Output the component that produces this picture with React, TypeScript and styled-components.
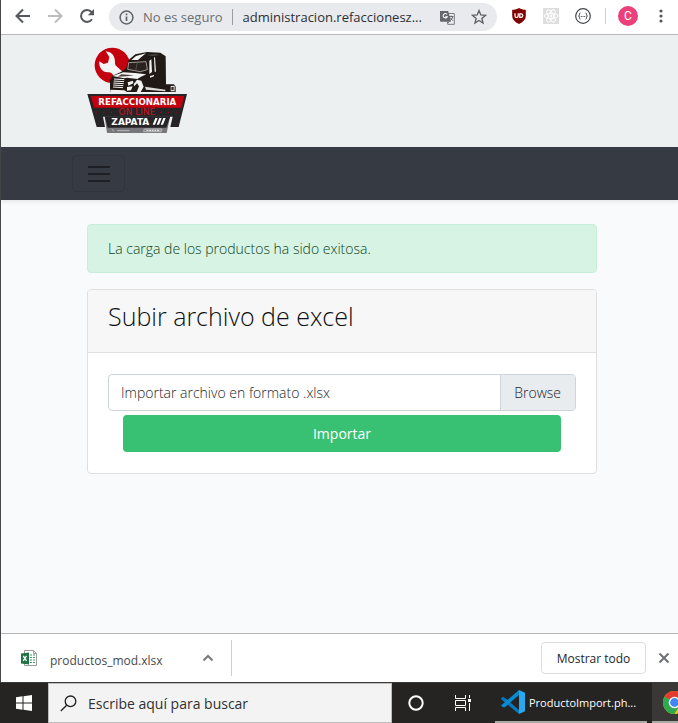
import React from "react";
import styled, { createGlobalStyle, css } from "styled-components";

const uiFont = '"Open Sans", "Noto Sans", sans-serif';
const siteFont = '"Open Sans", "Noto Sans", sans-serif';

const GlobalStyle = createGlobalStyle`
  *, *::before, *::after { box-sizing: border-box; }
  body { margin: 0; background: #f8fafc; font-family: ${siteFont}; }
  button, input { font: inherit; color: inherit; margin: 0; padding: 0; }
  h1, p { margin: 0; }
  svg { display: block; flex: none; }
`;

const Screen = styled.div`
  min-height: 100vh;
  display: flex;
  flex-direction: column;
`;

const BrowserWindow = styled.div`
  flex: 1;
  display: flex;
  flex-direction: column;
  border-left: 1px solid #46474a;
`;

const Toolbar = styled.header`
  display: flex;
  align-items: center;
  height: 35px;
  padding: 0 7px 2px 12px;
  background: #fff;
  border-bottom: 1px solid #b4b6b8;
  font-family: ${uiFont};
`;

const IconButton = styled.button<{ $w?: number }>`
  display: flex;
  align-items: center;
  justify-content: center;
  flex: none;
  width: ${({ $w = 32 }) => $w}px;
  height: 28px;
  border: 0;
  background: transparent;
  cursor: pointer;
`;

const AddressBar = styled.div`
  flex: 1;
  min-width: 0;
  display: flex;
  align-items: center;
  height: 28px;
  margin: 2px 6px 0 12px;
  padding: 0 2px 0 10px;
  border-radius: 14px;
  background: #e8eaed;
  font-size: 13px;
`;

const Security = styled.span`
  flex: none;
  padding: 0 9px;
  color: #6a6e73;
  border-right: 1px solid #9a9da1;
  line-height: 16px;
`;

const Address = styled.input`
  flex: 1;
  min-width: 0;
  margin-left: 10px;
  border: 0;
  outline: 0;
  background: transparent;
  color: #2c2f33;
`;

const Divider = styled.span<{ $h: number; $gap?: number }>`
  flex: none;
  width: 1px;
  height: ${({ $h }) => $h}px;
  margin-left: ${({ $gap = 0 }) => $gap}px;
  background: #cdcfd2;
`;

const Avatar = styled.button`
  flex: none;
  width: 20px;
  height: 20px;
  margin: 0 13px 0 12px;
  border: 0;
  border-radius: 50%;
  background: #ec407a;
  color: #fff;
  font: 12px/20px Roboto, sans-serif;
`;

const container = css`
  width: 100%;
  max-width: 540px;
  margin: 0 auto;
  padding: 0 15px;
`;

const Site = styled.div`
  flex: 1;
  background: #f8fafc;
`;

const Banner = styled.div`
  padding: 12px 0 13px 5px;
  background: #ecf0f1;
`;

const BannerInner = styled.div`
  ${container}
`;

const Navbar = styled.nav`
  padding: 8px 0 8px 5px;
  background: #363a42;
  box-shadow: 0 2px 4px rgba(0, 0, 0, 0.08);
`;

const NavInner = styled.div`
  ${container}
  padding: 0;
`;

const Toggler = styled.button`
  display: flex;
  align-items: center;
  justify-content: center;
  width: 53px;
  height: 37px;
  border: 1px solid #31343b;
  border-radius: 4px;
  background: transparent;
`;

const Content = styled.main`
  padding: 24px 0 24px 5px;
`;

const ContentInner = styled.div`
  ${container}
  display: flex;
  flex-direction: column;
  gap: 16px;
`;

const Alert = styled.div`
  padding: 12px 20px;
  border: 1px solid #c8eed9;
  border-radius: 4px;
  background: #d7f3e3;
  color: #0b4423;
  font-size: 14px;
  line-height: 23px;
  font-weight: 300;
`;

const Card = styled.section`
  border: 1px solid #dfdfe0;
  border-radius: 4px;
  background: #fff;
  overflow: hidden;
`;

const CardHeader = styled.div`
  padding: 11px 20px 21px;
  background: #f7f7f7;
  border-bottom: 1px solid #dfdfdf;
`;

const Title = styled.h1`
  font-size: 25px;
  line-height: 30px;
  font-weight: 300;
  color: #0c0f13;
`;

const CardBody = styled.form`
  padding: 21px 20px;
`;

const FileField = styled.label`
  display: flex;
  height: 37px;
  border: 1px solid #ced4da;
  border-radius: 4px;
  background: #fff;
  color: #212529;
  font-size: 14px;
  line-height: 35px;
  font-weight: 300;
  overflow: hidden;
  cursor: pointer;
`;

const FileName = styled.span`
  flex: 1;
  padding: 0 12px;
`;

const Browse = styled.span`
  padding: 0 14px 0 13px;
  border-left: 1px solid #ced4da;
  background: #e9ecef;
`;

const HiddenFile = styled.input`
  position: absolute;
  width: 1px;
  height: 1px;
  opacity: 0;
`;

const SubmitRow = styled.div`
  padding: 4px 15px 0;
`;

const Submit = styled.button`
  display: block;
  width: 100%;
  height: 37px;
  border: 0;
  border-radius: 4px;
  background: #38c172;
  color: #fff;
  font-size: 14px;
  cursor: pointer;
`;

const Downloads = styled.footer`
  display: flex;
  align-items: center;
  height: 49px;
  padding-left: 20px;
  border-top: 1px solid #b4b6b8;
  background: #fff;
  font-family: ${uiFont};
`;

const Download = styled.a`
  display: flex;
  align-items: center;
  gap: 12px;
  width: 178px;
  color: #46494d;
  font-size: 12px;
  text-decoration: none;
`;

const DownloadName = styled.span`
  padding-top: 4px;
`;

const Spacer = styled.span`
  flex: 1;
`;

const ShowAll = styled.button`
  height: 32px;
  width: 105px;
  margin-right: 4px;
  border: 1px solid #dadce0;
  border-radius: 4px;
  background: #fff;
  color: #24272a;
  font-size: 12px;
`;

const Taskbar = styled.div`
  display: flex;
  height: 41px;
  background: #252422;
  border-top: 1px solid #3a3a3a;
  color: #fff;
  font-family: ${uiFont};
  overflow: hidden;
`;

const TaskButton = styled.button<{ $w: number }>`
  display: flex;
  align-items: center;
  justify-content: center;
  flex: none;
  width: ${({ $w }) => $w}px;
  border: 0;
  background: transparent;
`;

const SearchBox = styled.label`
  flex: 1;
  min-width: 0;
  display: flex;
  align-items: center;
  gap: 11px;
  padding-left: 11px;
  border: 1px solid #bdbdbd;
  background: #f3f3f3;
`;

const SearchInput = styled.input`
  flex: 1;
  min-width: 0;
  border: 0;
  outline: 0;
  background: transparent;
  font-size: 14px;
  &::placeholder { color: #303030; opacity: 1; }
`;

const RunningTask = styled.button`
  display: flex;
  align-items: center;
  flex: none;
  gap: 3px;
  width: 152px;
  margin: 0 5px 0 8px;
  padding-left: 6px;
  border: 0;
  border-bottom: 2px solid #a9a9a5;
  background: transparent;
  font-size: 11px;
  white-space: nowrap;
`;

const ActiveTask = styled.button`
  flex: none;
  width: 26px;
  padding-left: 11px;
  border: 0;
  border-bottom: 2px solid #a9a9a5;
  background: #393836;
  overflow: hidden;
`;

const Arrow = ({ color, forward }: { color: string; forward?: boolean }) => (
  <svg width="16" height="16" viewBox="0 0 16 16" fill="none" stroke={color} strokeWidth="2">
    {forward ? <path d="M1 8h13M8 1.5 14.5 8 8 14.5" /> : <path d="M15 8H2M8 1.5 1.5 8 8 14.5" />}
  </svg>
);

const Reload = () => (
  <svg width="16" height="16" viewBox="0 0 16 16">
    <path d="M13 11.3A6 6 0 1 1 12.6 4" fill="none" stroke="#54585d" strokeWidth="2" />
    <path d="M15 1v6.2H8.8z" fill="#54585d" />
  </svg>
);

const Info = () => (
  <svg width="15" height="15" viewBox="0 0 15 15">
    <circle cx="7.5" cy="7.5" r="6.4" fill="none" stroke="#5f6368" strokeWidth="1.5" />
    <path d="M7.5 6.5v4.5M7.5 3.6v1.7" stroke="#5f6368" strokeWidth="1.7" />
  </svg>
);

const Translate = () => (
  <svg width="15" height="15" viewBox="0 0 15 15" fill="none">
    <path d="M6 3.5h8.3v10.8H7.5" fill="#eff0f2" stroke="#777b80" />
    <path d="M0 1h8.2l2.8 10.8H1a1 1 0 0 1-1-1z" fill="#63676c" />
    <path d="M7 4.3a2.2 2.2 0 1 0 .3 2.4H5.2" stroke="#fff" strokeWidth="1.1" />
    <path d="M9 6.6h4.5M11.2 5.5v1M12.7 6.8c-.3 1.8-1.6 3-2.5 3.8M10 7.5l3 3.3" stroke="#63676c" />
    <path d="M7.3 14.3l2.3-2.5H7z" fill="#63676c" />
  </svg>
);

const Star = () => (
  <svg width="16" height="16" viewBox="0 0 16 16">
    <path d="M8 1.6l1.8 4.3 4.7.4-3.6 3.1 1.1 4.6L8 11.5 4 14l1.1-4.6-3.6-3.1 4.7-.4z" fill="none" stroke="#5f6368" strokeWidth="1.4" />
  </svg>
);

const Shield = () => (
  <svg width="16" height="16" viewBox="0 0 16 16" fill="none">
    <path d="M8 0c2 1.3 4 1.7 6.8 1.8v6C14.8 11.6 12 14.2 8 16 4 14.2 1.2 11.6 1.2 7.8v-6C4 1.7 6 1.3 8 0z" fill="#800000" />
    <path d="M4 5.3v2.6a1.6 1.6 0 0 0 3.2 0V5.3" stroke="#fff" strokeWidth="1.2" />
    <path d="M8.8 5.8h1.3a1.7 1.7 0 0 1 0 3.5H8.8z" stroke="#fff" strokeWidth="1.2" />
  </svg>
);

const Atom = () => (
  <svg width="16" height="16" viewBox="0 0 16 16" fill="none" stroke="#fff">
    <path d="M0 0h16v16H0z" fill="#dedede" stroke="none" />
    <ellipse cx="8" cy="8" rx="6.8" ry="2.6" />
    <ellipse cx="8" cy="8" rx="6.8" ry="2.6" transform="rotate(60 8 8)" />
    <ellipse cx="8" cy="8" rx="6.8" ry="2.6" transform="rotate(120 8 8)" />
    <circle cx="8" cy="8" r="1" fill="#fff" />
  </svg>
);

const Braces = () => (
  <svg width="16" height="16" viewBox="0 0 16 16" fill="none" stroke="#45484b">
    <circle cx="8" cy="8" r="7.3" strokeWidth="1.2" />
    <path d="M5.5 5c-1.3 0-1 .6-1 1.7 0 .8-.3 1.1-1 1.3.7.2 1 .5 1 1.3 0 1.1-.3 1.7 1 1.7M10.5 5c1.3 0 1 .6 1 1.7 0 .8.3 1.1 1 1.3-.7.2-1 .5-1 1.3 0 1.1.3 1.7-1 1.7" />
    <path d="M5.8 8.5h1M7.5 8.5h1M9.2 8.5h1" />
  </svg>
);

const Dots = () => (
  <svg width="4" height="16" viewBox="0 0 4 16" fill="#54585d">
    <circle cx="2" cy="3" r="1.6" />
    <circle cx="2" cy="8" r="1.6" />
    <circle cx="2" cy="13" r="1.6" />
  </svg>
);

const Logo = () => (
  <svg width="100" height="87" viewBox="51 21 300 261" role="img" aria-label="Refaccionaria On Line Zapata">
    <circle cx="127" cy="76" r="53" fill="#c4000f" />
    <path d="M88 64c-2 18 8 33 25 33 6 0 9 0 13 4l14 16 26-14-28-26c-3-3-3-7-3-12 0-17-10-29-28-31l11 17-4 17-13 4z" fill="#f4f4f4" />
    <path d="M120 156v-36l8-13 26-12 14-10 8-25 20-17 35-7 40 2 16 11 1 84h24l5 7v16z" fill="#211915" />
    <path d="M184 60l14-12 30-8-14 11-10 9z" fill="#f4f4f4" />
    <path d="M176 68l52-3 4 24-21 6-38-7z" fill="#2b211d" stroke="#d8d6d5" strokeWidth="2" />
    <path d="M202 67l-5 25" stroke="#6b6563" strokeWidth="2" />
    <path d="M238 62l6-4 2 38-8 6zM252 53l3-2 3 44h-4zM240 108l12-3v4l-12 4z" fill="#f1f1f1" />
    <path d="M229 45l26-3 15 3-22 3z" fill="#4a4441" />
    <path d="M128 108l32-11 35 2 34 4-16 7-11 7-31-4-9 2z" fill="#f4f4f4" />
    <path d="M154 103l38 3-22 3-27 1z" fill="#51433e" />
    <path d="M132 117l31 2M131 123l31 2M130 129l31 2M130 135l30 2M129 141l30 2" stroke="#f4f4f4" strokeWidth="3" />
    <path d="M121 149l42 2 8 5h-50zM173 127l16-5 1 8-15 7zM171 141l17-2-5 12-12 1zM191 133l10-14 13 3 7 18-9 16h-12l7-17-6-9-8 9z" fill="#f1f1f1" />
    <path d="M225 140l61 9v5l-58-5zM302 138l12-1v17h-12z" fill="#dedddd" />
    <path d="M304 141h7v9h-7z" fill="#3a312e" />
    <path d="M104 231l7 48h179l10-48z" fill="#77777b" />
    <path d="M52 162h299l-25 99h-25l7-31H99l6 31H80z" fill="#272427" />
    <path d="M104 229h197l-12 34H113z" fill="#272427" />
    <path d="M62 168h280l-8 35H72z" fill="#c4000f" />
    <g fontFamily="DejaVu Sans, sans-serif" textAnchor="middle">
      <text x="202" y="194" fontSize="26" fontWeight="700" fill="#fff">REFACCIONARIA</text>
      <text x="201" y="225" fontSize="27" fill="#c81824">ON LINE</text>
      <text x="181" y="254" fontSize="27" fontWeight="700" fill="#fff">ZAPATA</text>
    </g>
    <path d="M248 254l8-20h7l-8 20zM260 254l8-20h7l-8 20zM272 254l8-20h7l-8 20z" fill="#fff" />
    <path d="M77 217h3m20 0h3m20 0h3m145 0h3m20 0h3m20 0h3" stroke="#c4000f" strokeWidth="3" />
    <path d="M223 267h53l-2 8h-53zM142 272h36M125 267l7 7" fill="none" stroke="#bcbcc0" strokeWidth="3" />
    <path d="M229 271h42" stroke="#dedee0" strokeWidth="4" strokeDasharray="6 2" />
  </svg>
);

const Menu = () => (
  <svg width="22" height="18" viewBox="0 0 22 18" stroke="#1d1f24" strokeWidth="2">
    <path d="M0 2h22M0 9h22M0 16h22" />
  </svg>
);

const Excel = () => (
  <svg width="17" height="17" viewBox="0 0 17 17" fill="none">
    <path d="M3.5.5h9l3 3v12h-12z" fill="#fff" stroke="#9b9b9b" />
    <path d="M12.5.5v3h3" stroke="#9b9b9b" />
    <path d="M9 5h2M12 5h2M9 7.5h2M12 7.5h2M9 10h2M12 10h2M9 12.5h2M12 12.5h2" stroke="#459267" />
    <path d="M0 3.5 8 2.5v12L0 13.5z" fill="#217346" />
    <path d="M2.2 5.8l3.3 5M5.5 5.8l-3.3 5" stroke="#fff" strokeWidth="1.3" />
  </svg>
);

const Chevron = () => (
  <svg width="12" height="8" viewBox="0 0 12 8" fill="none" stroke="#777a7d" strokeWidth="2">
    <path d="M1.5 6.5 6 2l4.5 4.5" />
  </svg>
);

const Close = () => (
  <svg width="12" height="12" viewBox="0 0 12 12" stroke="#6d7074" strokeWidth="2">
    <path d="M1.5 1.5l9 9M10.5 1.5l-9 9" />
  </svg>
);

const Windows = () => (
  <svg width="16" height="16" viewBox="0 0 16 16" fill="#fff">
    <path d="M0 2.2 6.5 1.3v6.2H0zM7.5 1.2 16 0v7.5H7.5zM0 8.5h6.5v6.2L0 13.8zM7.5 8.5H16V16l-8.5-1.2z" />
  </svg>
);

const Search = () => (
  <svg width="17" height="17" viewBox="0 0 17 17" fill="none" stroke="#202020" strokeWidth="1.3">
    <circle cx="10.5" cy="6.3" r="5.3" />
    <path d="M6.7 10.2.8 16" />
  </svg>
);

const Cortana = () => (
  <svg width="16" height="16" viewBox="0 0 16 16">
    <circle cx="8" cy="8" r="6.7" fill="none" stroke="#fff" strokeWidth="2" />
  </svg>
);

const TaskView = () => (
  <svg width="16" height="16" viewBox="0 0 16 16" fill="none" stroke="#fff">
    <path d="M.5 0v3.5h10V0M.5 16v-3.5h10V16M.5 5.5h10v5H.5zM14.5 0v3M14.5 8v8" />
    <path d="M13 4h3v3h-3z" fill="#fff" stroke="none" />
  </svg>
);

const Code = () => (
  <svg width="25" height="24" viewBox="0 0 25 24">
    <path d="M0 8.5 2 6.8l4 2.7L18 20v4L1 10z" fill="#0879bd" />
    <path d="M0 15.5 18 0v5L4 17.2H2z" fill="#078bd0" />
    <path d="M18 0l6 2.8v18.4L18 24z" fill="#27a8ef" />
  </svg>
);

const Chrome = () => (
  <svg width="23" height="23" viewBox="0 0 24 24">
    <circle cx="12" cy="12" r="12" fill="#fbc116" />
    <path d="M12 12 1.6 6A12 12 0 0 1 22.4 6z" fill="#e33b2e" />
    <path d="M12 12 1.6 6A12 12 0 0 0 12 24l5.2-9z" fill="#2da94f" />
    <path d="M12 6h10.4" stroke="#e33b2e" />
    <circle cx="12" cy="12" r="6" fill="#fff" />
    <circle cx="12" cy="12" r="4.6" fill="#4285f4" />
  </svg>
);

export default function App() {
  return (
    <Screen>
      <GlobalStyle />
      <BrowserWindow>
        <Toolbar>
          <IconButton $w={20} aria-label="Atrás"><Arrow color="#54585d" /></IconButton>
          <IconButton $w={44} aria-label="Adelante"><Arrow color="#babcbe" forward /></IconButton>
          <IconButton $w={20} aria-label="Recargar"><Reload /></IconButton>
          <AddressBar>
            <Info />
            <Security>No es seguro</Security>
            <Address aria-label="Dirección" readOnly value="administracion.refaccionesz..." />
            <IconButton aria-label="Traducir"><Translate /></IconButton>
            <IconButton aria-label="Añadir a favoritos"><Star /></IconButton>
          </AddressBar>
          <IconButton aria-label="uBlock"><Shield /></IconButton>
          <IconButton aria-label="React"><Atom /></IconButton>
          <IconButton aria-label="JSON"><Braces /></IconButton>
          <Divider $h={16} $gap={6} />
          <Avatar aria-label="Perfil">C</Avatar>
          <IconButton $w={20} aria-label="Menú"><Dots /></IconButton>
        </Toolbar>
        <Site>
          <Banner><BannerInner><Logo /></BannerInner></Banner>
          <Navbar>
            <NavInner><Toggler aria-label="Menú de navegación"><Menu /></Toggler></NavInner>
          </Navbar>
          <Content>
            <ContentInner>
              <Alert role="alert">La carga de los productos ha sido exitosa.</Alert>
              <Card>
                <CardHeader><Title>Subir archivo de excel</Title></CardHeader>
                <CardBody onSubmit={(e) => e.preventDefault()}>
                  <FileField htmlFor="archivo">
                    <HiddenFile id="archivo" type="file" accept=".xlsx" />
                    <FileName>Importar archivo en formato .xlsx</FileName>
                    <Browse>Browse</Browse>
                  </FileField>
                  <SubmitRow><Submit type="submit">Importar</Submit></SubmitRow>
                </CardBody>
              </Card>
            </ContentInner>
          </Content>
        </Site>
        <Downloads>
          <Download href="#productos"><Excel /><DownloadName>productos_mod.xlsx</DownloadName></Download>
          <IconButton aria-label="Opciones de descarga" $w={18}><Chevron /></IconButton>
          <Divider $h={36} $gap={14} />
          <Spacer />
          <ShowAll>Mostrar todo</ShowAll>
          <IconButton $w={28} aria-label="Cerrar"><Close /></IconButton>
        </Downloads>
      </BrowserWindow>
      <Taskbar>
        <TaskButton $w={48} aria-label="Inicio"><Windows /></TaskButton>
        <SearchBox>
          <Search />
          <SearchInput aria-label="Buscar" placeholder="Escribe aquí para buscar" />
        </SearchBox>
        <TaskButton $w={47} aria-label="Cortana"><Cortana /></TaskButton>
        <TaskButton $w={48} aria-label="Vista de tareas"><TaskView /></TaskButton>
        <RunningTask><Code />ProductoImport.ph...</RunningTask>
        <ActiveTask aria-label="Chrome"><Chrome /></ActiveTask>
      </Taskbar>
    </Screen>
  );
}
